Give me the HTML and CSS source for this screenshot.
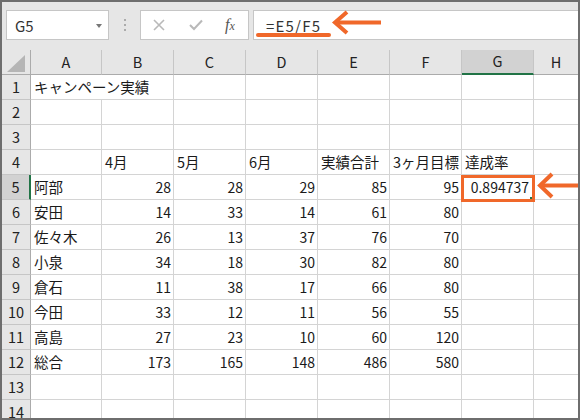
FILE: index.html
```html
<!DOCTYPE html>
<html lang="ja">
<head>
<meta charset="utf-8">
<link rel="stylesheet" href="styles.css">
</head>
<body>
<div class="frame">
  <div class="fbar">
    <div class="namebox"><span class="nb-text">G5</span><span class="dd"></span></div>
    <div class="dots"><span></span><span></span><span></span></div>
    <div class="fnbox">
      <svg class="ic" width="12" height="12" viewBox="0 0 12 12"><path d="M1 1 L11 11 M11 1 L1 11" stroke="#b9b9b9" stroke-width="1.6" fill="none"/></svg>
      <svg class="ic" width="14" height="12" viewBox="0 0 14 12"><path d="M1 6 L5 10 L13 1.5" stroke="#b9b9b9" stroke-width="2" fill="none"/></svg>
      <span class="fx">f<span class="fxx">x</span></span>
    </div>
    <div class="formula"><span class="ftext">=E5/F5</span></div>
  </div>
  <div class="sheet">
    <div class="h corner"><svg width="20" height="18" viewBox="0 0 20 18"><path d="M18 0 L18 17 L0 17 Z" fill="#b5b5b5"/></svg></div>
    <div class="h c">A</div><div class="h c">B</div><div class="h c">C</div><div class="h c">D</div><div class="h c">E</div><div class="h c">F</div><div class="h c sel">G</div><div class="h c last">H</div>

    <div class="h r">1</div><div class="t nor">キャンペーン実績</div><div></div><div></div><div></div><div></div><div></div><div></div><div class="last"></div>
    <div class="h r">2</div><div></div><div></div><div></div><div></div><div></div><div></div><div></div><div class="last"></div>
    <div class="h r">3</div><div></div><div></div><div></div><div></div><div></div><div></div><div></div><div class="last"></div>
    <div class="h r">4</div><div></div><div class="t">4月</div><div class="t">5月</div><div class="t">6月</div><div class="t">実績合計</div><div class="t">3ヶ月目標</div><div class="t">達成率</div><div class="last"></div>
    <div class="h r rsel">5</div><div class="t">阿部</div><div class="n">28</div><div class="n">28</div><div class="n">29</div><div class="n">85</div><div class="n">95</div><div class="n active">0.894737<span class="handle"></span></div><div class="last"></div>
    <div class="h r">6</div><div class="t">安田</div><div class="n">14</div><div class="n">33</div><div class="n">14</div><div class="n">61</div><div class="n">80</div><div></div><div class="last"></div>
    <div class="h r">7</div><div class="t">佐々木</div><div class="n">26</div><div class="n">13</div><div class="n">37</div><div class="n">76</div><div class="n">70</div><div></div><div class="last"></div>
    <div class="h r">8</div><div class="t">小泉</div><div class="n">34</div><div class="n">18</div><div class="n">30</div><div class="n">82</div><div class="n">80</div><div></div><div class="last"></div>
    <div class="h r">9</div><div class="t">倉石</div><div class="n">11</div><div class="n">38</div><div class="n">17</div><div class="n">66</div><div class="n">80</div><div></div><div class="last"></div>
    <div class="h r">10</div><div class="t">今田</div><div class="n">33</div><div class="n">12</div><div class="n">11</div><div class="n">56</div><div class="n">55</div><div></div><div class="last"></div>
    <div class="h r">11</div><div class="t">高島</div><div class="n">27</div><div class="n">23</div><div class="n">10</div><div class="n">60</div><div class="n">120</div><div></div><div class="last"></div>
    <div class="h r">12</div><div class="t">総合</div><div class="n">173</div><div class="n">165</div><div class="n">148</div><div class="n">486</div><div class="n">580</div><div></div><div class="last"></div>
    <div class="h r">13</div><div></div><div></div><div></div><div></div><div></div><div></div><div></div><div class="last"></div>
    <div class="h r">14</div><div></div><div></div><div></div><div></div><div></div><div></div><div></div><div class="last"></div>
  </div>
  <svg class="overlay" width="580" height="420" viewBox="0 0 580 420">
    <line x1="258" y1="35" x2="329" y2="35" stroke="#f0682a" stroke-width="4" stroke-linecap="round"/>
    <line x1="337" y1="22.5" x2="381" y2="22.5" stroke="#f0682a" stroke-width="4"/>
    <polyline points="347,12 335,22.5 347,33" stroke="#f0682a" stroke-width="4" fill="none"/>
    <line x1="541" y1="185.5" x2="580" y2="185.5" stroke="#f0682a" stroke-width="4"/>
    <polyline points="552,174 540,185.5 552,197" stroke="#f0682a" stroke-width="4" fill="none"/>
  </svg>
</div>
</body>
</html>
```

FILE: styles.css
```css
html, body {
  margin: 0;
  padding: 0;
}
body {
  width: 580px;
  height: 420px;
  overflow: hidden;
  font-family: "Noto Sans CJK JP", "Noto Sans", sans-serif;
  color: #1a1a1a;
}
.frame {
  position: relative;
  width: 580px;
  height: 420px;
  box-sizing: border-box;
  border: 2px solid #6e6e6e;
  background: #fff;
  overflow: hidden;
}
.fbar {
  height: 48px;
  box-sizing: border-box;
  background: #e6e6e6;
  display: flex;
  align-items: flex-start;
  padding: 8px 0 0 4px;
}
.namebox {
  width: 103px;
  height: 30px;
  box-sizing: border-box;
  background: #fff;
  border: 1px solid #c6c6c6;
  display: flex;
  align-items: center;
  justify-content: space-between;
  padding: 0 6px 0 8px;
}
.nb-text, .ftext {
  font-size: 15px;
  color: #333;
  line-height: 1;
}
.ftext {
  letter-spacing: 1.2px;
}
.dd {
  width: 0;
  height: 0;
  border-left: 3.5px solid transparent;
  border-right: 3.5px solid transparent;
  border-top: 4px solid #777;
  margin-top: 1px;
}
.dots {
  width: 31px;
  height: 30px;
  display: flex;
  flex-direction: column;
  align-items: center;
  justify-content: center;
  gap: 3px;
}
.dots span {
  width: 2px;
  height: 2px;
  background: #ababab;
}
.fnbox {
  width: 109px;
  height: 30px;
  box-sizing: border-box;
  background: #fff;
  border: 1px solid #c6c6c6;
  display: flex;
  align-items: center;
  padding: 0 0 0 12px;
  gap: 24px;
}
.ic {
  display: block;
}
.fx {
  font-family: "Liberation Serif", serif;
  font-style: italic;
  font-size: 16px;
  color: #555;
  margin-left: -2px;
  line-height: 1;
}
.fxx {
  font-size: 12px;
}
.formula {
  flex: 1;
  height: 30px;
  box-sizing: border-box;
  margin-left: 4px;
  background: #fff;
  border: 1px solid #c6c6c6;
  border-right: none;
  display: flex;
  align-items: center;
  padding-left: 12px;
}
.sheet {
  display: grid;
  grid-template-columns: 29px 71px repeat(6, 72px) 1fr;
  grid-auto-rows: 25px;
  font-size: 14.5px;
}
.sheet > div {
  box-sizing: border-box;
  border-right: 1px solid #d4d4d4;
  border-bottom: 1px solid #d4d4d4;
  display: flex;
  align-items: center;
  white-space: nowrap;
  line-height: 1;
  min-width: 0;
}
.sheet > div.last {
  border-right: none;
}
.sheet > div.nor {
  border-right: none;
}
.sheet > .h {
  background: #e6e6e6;
  color: #222;
  font-size: 14.5px;
  justify-content: center;
  border-right-color: #c6c6c6;
  border-bottom-color: #c6c6c6;
}
.sheet > .h.c {
  border-bottom-color: #ababab;
}
.sheet > .h.r {
  border-right-color: #ababab;
}
.sheet > .corner {
  justify-content: flex-end;
  align-items: flex-end;
  padding: 0 3px 1px 0;
  border-bottom-color: #ababab;
  border-right-color: #ababab;
}
.corner svg {
  display: block;
}
.sheet > .h.sel {
  background: #d2d2d2;
  border-bottom: 2px solid #217346;
}
.sheet > .h.rsel {
  background: #d2d2d2;
  border-right: 2px solid #217346;
}
.t {
  padding-left: 3px;
  overflow: visible;
}
.n {
  justify-content: flex-end;
  padding-right: 2px;
  font-size: 14px;
}
.active {
  position: relative;
  padding-right: 4px;
}
.active::after {
  content: "";
  position: absolute;
  left: -1px;
  right: -2px;
  top: 0;
  bottom: -3px;
  border: 3px solid #f0682a;
}
.handle {
  position: absolute;
  right: 1px;
  bottom: 0;
  width: 2px;
  height: 2px;
  background: #217346;
  z-index: 1;
}
.overlay {
  position: absolute;
  left: -2px;
  top: -2px;
  pointer-events: none;
}
```
